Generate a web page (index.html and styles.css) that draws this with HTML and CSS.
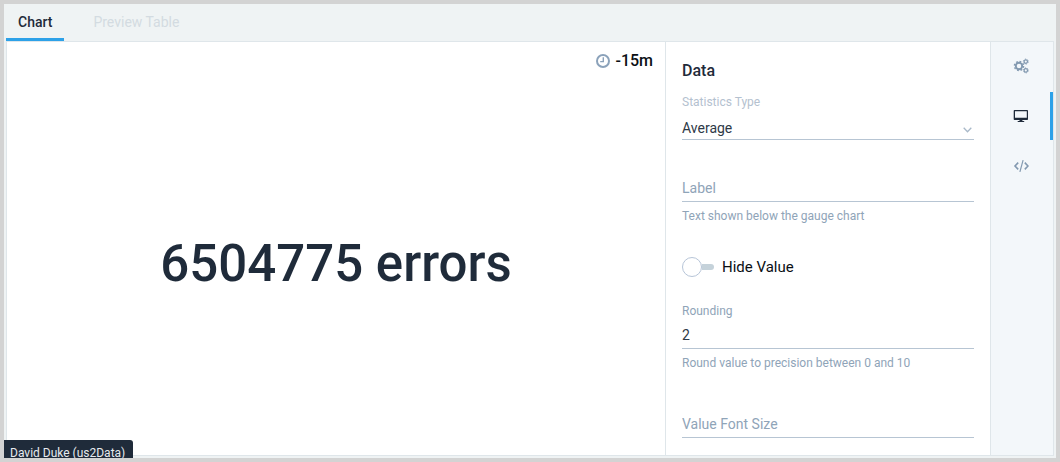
FILE: index.html
```html
<!DOCTYPE html>
<html lang="en">
<head>
<meta charset="utf-8">
<title>Chart editor</title>
<link rel="stylesheet" href="styles.css">
</head>
<body>
<div class="app">
  <nav class="tabs">
    <button class="tab tab-active" type="button">Chart</button>
    <button class="tab" type="button">Preview Table</button>
  </nav>
  <main class="workspace">
    <section class="chart">
      <div class="time-range">
        <svg class="clock" viewBox="0 0 14 14" fill="none" stroke="currentColor"><circle cx="7" cy="7" r="6" stroke-width="2"/><path d="M7.3 3.200v4.400H4.200" stroke-width="1.400"/></svg>
        <span>-15m</span>
      </div>
      <div class="value">6504775 errors</div>
    </section>
    <form class="settings">
      <h2 class="settings-title">Data</h2>
      <div class="field field-select">
        <label class="caption caption-light" for="stat">Statistics Type</label>
        <div class="select-wrap">
          <select class="control select" id="stat"><option>Average</option></select>
          <svg class="chevron" viewBox="0 0 9 6" fill="none" stroke="currentColor" stroke-width="1.300"><path d="M.7.7 4.500 4.700 8.300.7"/></svg>
        </div>
      </div>
      <div class="field">
        <input class="control" id="label" type="text" placeholder="Label" aria-label="Label">
        <p class="help">Text shown below the gauge chart</p>
      </div>
      <label class="toggle"><input class="switch" type="checkbox"><span>Hide Value</span></label>
      <div class="field field-rounding">
        <label class="caption" for="rounding">Rounding</label>
        <input class="control control-captioned" id="rounding" type="text" value="2">
        <p class="help">Round value to precision between 0 and 10</p>
      </div>
      <div class="field">
        <input class="control" id="size" type="text" placeholder="Value Font Size" aria-label="Value Font Size">
      </div>
    </form>
    <aside class="rail">
      <button class="rail-button" type="button" aria-label="General settings">
        <svg width="16" height="16" viewBox="0 0 16 16" fill="none" stroke="currentColor">
          <circle cx="6" cy="8" r="3.2" stroke-width="1.9"/>
          <circle cx="6" cy="8" r="4.600" stroke-width="1.400" stroke-dasharray="1.8 1.81"/>
          <circle cx="12.8" cy="3.6" r="1.7" stroke-width="1.200"/>
          <circle cx="12.8" cy="3.6" r="2.5" stroke-width=".9" stroke-dasharray="1.3 1.32"/>
          <circle cx="12.8" cy="12.4" r="1.7" stroke-width="1.200"/>
          <circle cx="12.8" cy="12.4" r="2.5" stroke-width=".9" stroke-dasharray="1.3 1.32"/>
        </svg>
      </button>
      <button class="rail-button rail-active" type="button" aria-label="Display settings">
        <svg width="16" height="14" viewBox="0 0 16 14" fill="currentColor"><path fill-rule="evenodd" d="M1.500 1h12.700q.8 0 .8.8v8.400q0 .8-.8.8H9.400v1h1.800v1H4.700v-1h1.800v-1H1.500q-.8 0-.8-.8V1.800q0-.8.8-.8ZM2 2.200V8.800H13.800V2.200Z"/></svg>
      </button>
      <button class="rail-button" type="button" aria-label="Source">
        <svg width="16" height="14" viewBox="0 0 16 14" fill="none" stroke="currentColor"><path d="M5.200 3.600 2 7l3.200 3.400M11.800 3.600 15 7l-3.200 3.400" stroke-width="1.600"/><path d="M10.100 1.200 6.900 12.800" stroke-width="1.200"/></svg>
      </button>
    </aside>
  </main>
  <div class="status">David Duke (us2Data)</div>
</div>
</body>
</html>
```
FILE: styles.css
```css
* {
  box-sizing: border-box;
}

body {
  margin: 0;
  font-family: Roboto, "Liberation Sans", sans-serif;
  color: #1f2b3a;
}

button,
input,
select {
  margin: 0;
  padding: 0;
  border: 0;
  border-radius: 0;
  background: none;
  color: inherit;
  font: inherit;
  outline: none;
}

.app {
  position: relative;
  display: flex;
  flex-direction: column;
  height: 100vh;
  padding: 0 2px 2px;
  border: 4px solid #d3d3d3;
  background: #eff3f4;
  overflow: hidden;
}

.tabs {
  display: flex;
  flex: none;
  height: 37px;
}

.tab {
  padding: 1px 12px 0;
  border-bottom: 3px solid transparent;
  font-size: 14px;
  line-height: 30px;
  color: #d3dbe1;
}

.tab + .tab {
  margin-left: 17px;
}

.tab-active {
  border-color: #2da1e8;
  font-weight: 500;
  color: #1f2b3a;
}

.workspace {
  display: flex;
  flex: 1;
  min-height: 0;
  border: 1px solid #dfe6ea;
  background: #fff;
}

.chart {
  display: flex;
  flex: 1;
  flex-direction: column;
  min-width: 0;
}

.time-range {
  display: flex;
  justify-content: flex-end;
  align-items: center;
  gap: 5px;
  padding: 9px 12px 0 0;
  font-size: 16px;
  font-weight: 500;
  line-height: 20px;
  color: #0b0f14;
}

.clock {
  width: 14px;
  height: 14px;
  color: #8ba2ba;
}

.value {
  display: flex;
  flex: 1;
  align-items: center;
  justify-content: center;
  padding-top: 2px;
  font-size: 51px;
  font-weight: 500;
  line-height: 60px;
}

.settings {
  flex: none;
  width: 325px;
  padding: 19px 16px 0;
  border-left: 1px solid #dfe6ea;
  overflow: hidden;
}

.settings-title {
  margin: 0 0 13px;
  font-size: 16px;
  font-weight: 500;
  line-height: 20px;
}

.field {
  margin-bottom: 33px;
}

.field-select {
  margin-bottom: 34px;
}

.field-rounding {
  margin-bottom: 39px;
}

.caption,
.help {
  display: block;
  margin: 0;
  font-size: 12px;
  line-height: 16px;
  color: #8fa4b8;
}

.caption-light {
  color: #b4c1cf;
}

.help {
  margin-top: 6px;
}

.control {
  display: block;
  width: 100%;
  height: 28px;
  border-bottom: 1px solid #b7c5d3;
  font-size: 14px;
  color: #2e3947;
}

.control::placeholder {
  color: #8fa4b8;
  opacity: 1;
}

.control-captioned {
  margin-top: 2px;
}

.select-wrap {
  position: relative;
  margin-top: 8px;
}

.select {
  height: 22px;
  padding-bottom: 2px;
  appearance: none;
}

.chevron {
  position: absolute;
  right: 2px;
  bottom: 7px;
  width: 9px;
  height: 6px;
  color: #a9b9c9;
  pointer-events: none;
}

.toggle {
  display: flex;
  align-items: center;
  gap: 8px;
  margin-bottom: 26px;
  font-size: 15px;
  line-height: 20px;
  color: #0b0f14;
}

.switch {
  display: flex;
  align-items: center;
  width: 32px;
  height: 18px;
  appearance: none;
}

.switch::before {
  content: "";
  width: 18px;
  height: 18px;
  border: 1px solid #b7c5d8;
  border-radius: 50%;
  background: #fff;
}

.switch::after {
  content: "";
  flex: 1;
  height: 6px;
  border-radius: 0 3px 3px 0;
  background: #c5d2da;
}

.rail {
  display: flex;
  flex: none;
  flex-direction: column;
  gap: 2px;
  width: 63px;
  border-left: 1px solid #dfe6ea;
  background: #f3f7fa;
}

.rail-button {
  display: flex;
  align-items: center;
  justify-content: center;
  height: 48px;
  border-right: 3px solid transparent;
  color: #8299b0;
}

.rail-active {
  border-color: #2da1e8;
  color: #1f2b3a;
}

.status {
  position: absolute;
  left: 0;
  bottom: 0;
  height: 18px;
  padding: 5px 8px 0 6px;
  border-radius: 0 3px 0 0;
  background: #1f2b3a;
  color: #e6eaee;
  font-size: 12px;
  line-height: 16px;
  overflow: hidden;
}
```
